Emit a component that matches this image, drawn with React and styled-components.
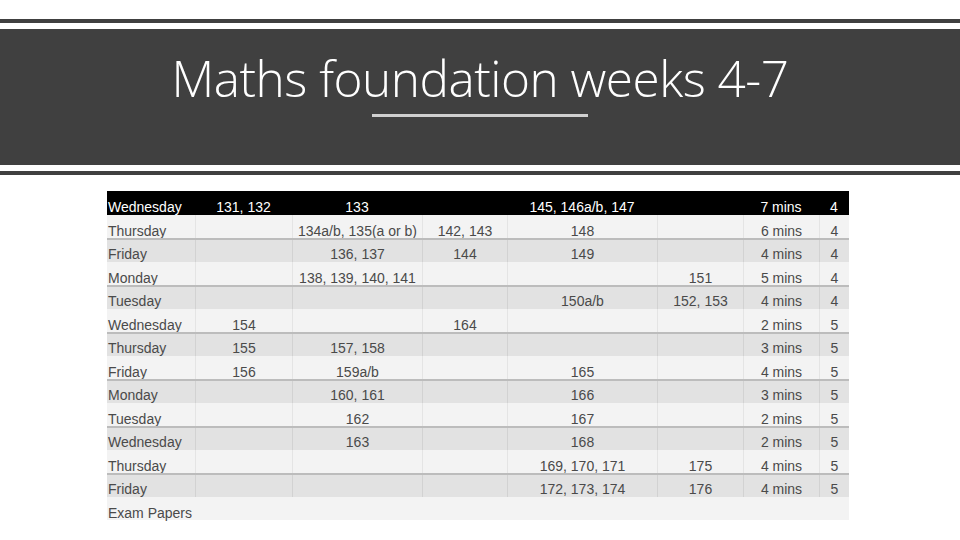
import React from 'react';
import styled, { createGlobalStyle } from 'styled-components'

const GlobalStyle = createGlobalStyle`
  body {
    margin: 0;
    background: #ffffff;
  }
`

const rows = [
  ['Wednesday', '131, 132', '133', '', '145, 146a/b, 147', '', '7 mins', '4'],
  ['Thursday', '', '134a/b, 135(a or b)', '142, 143', '148', '', '6 mins', '4'],
  ['Friday', '', '136, 137', '144', '149', '', '4 mins', '4'],
  ['Monday', '', '138, 139, 140, 141', '', '', '151', '5 mins', '4'],
  ['Tuesday', '', '', '', '150a/b', '152, 153', '4 mins', '4'],
  ['Wednesday', '154', '', '164', '', '', '2 mins', '5'],
  ['Thursday', '155', '157, 158', '', '', '', '3 mins', '5'],
  ['Friday', '156', '159a/b', '', '165', '', '4 mins', '5'],
  ['Monday', '', '160, 161', '', '166', '', '3 mins', '5'],
  ['Tuesday', '', '162', '', '167', '', '2 mins', '5'],
  ['Wednesday', '', '163', '', '168', '', '2 mins', '5'],
  ['Thursday', '', '', '', '169, 170, 171', '175', '4 mins', '5'],
  ['Friday', '', '', '', '172, 173, 174', '176', '4 mins', '5'],
  ['Exam Papers', '', '', '', '', '', '', ''],
]

const App = () => {
  return (
    <Page>
      <GlobalStyle />
      <Rule />
      <Banner>
        <Title>Maths foundation weeks 4-7</Title>
        <Underline />
      </Banner>
      <Rule $gap={6} />
      <Table>
        {rows.map((row, i) => {
          const kind = i === 0 ? 'head' : i % 2 === 0 ? 'dark' : 'light'
          const plain = i === rows.length - 1
          return (
            <Row key={i} $kind={kind}>
              {row.map((cell, j) => (
                <Cell key={j} $kind={kind} $first={j === 0} $plain={plain}>
                  {cell}
                </Cell>
              ))}
            </Row>
          )
        })}
      </Table>
    </Page>
  )
}

export default App

const Page = styled.div`
  width: 960px;
  height: 540px;
  overflow: hidden;
  display: flex;
  flex-direction: column;
  font-family: "Liberation Sans", Arial, sans-serif;
`

const Rule = styled.div`
  height: 4px;
  margin-top: ${p => p.$gap ?? 19}px;
  background: #404040;
`

const Banner = styled.div`
  height: 136px;
  margin-top: 6px;
  background: #404040;
  display: flex;
  flex-direction: column;
  align-items: center;
`

const Title = styled.h1`
  margin: 20px 0 0;
  font-family: "Open Sans", Lato, sans-serif;
  font-weight: 300;
  font-size: 49.5px;
  line-height: 58px;
  color: #ffffff;
  letter-spacing: -0.5px;
`

const Underline = styled.div`
  width: 216px;
  height: 3px;
  margin-top: 7px;
  background: #d0d0d0;
`

const Table = styled.div`
  margin: 16px 0 0 107px;
  width: 742px;
  display: flex;
  flex-direction: column;
`

const Row = styled.div`
  display: grid;
  grid-template-columns: 88px 97px 130px 85px 150px 86px 76px 30px;
  height: 23.5px;
  box-sizing: border-box;
  background: ${p => p.$kind === 'head' ? '#000000' : p.$kind === 'dark' ? '#e2e2e2' : '#f3f3f3'};
  border-top: ${p => p.$kind === 'dark' ? '2px solid #bcbcbc' : 'none'};
`

const Cell = styled.div`
  box-sizing: border-box;
  padding-top: ${p => p.$kind === 'dark' ? 6 : 8}px;
  font-size: 14px;
  line-height: 16px;
  white-space: nowrap;
  text-align: ${p => p.$first ? 'left' : 'center'};
  padding-left: ${p => p.$first ? 1 : 0}px;
  color: ${p => p.$kind === 'head' ? '#ffffff' : '#4a4a4a'};
  border-left: ${p => p.$first || p.$kind === 'head' || p.$plain ? 'none' : `1px solid ${p.$kind === 'dark' ? '#d2d2d2' : '#e4e4e4'}`};
`
